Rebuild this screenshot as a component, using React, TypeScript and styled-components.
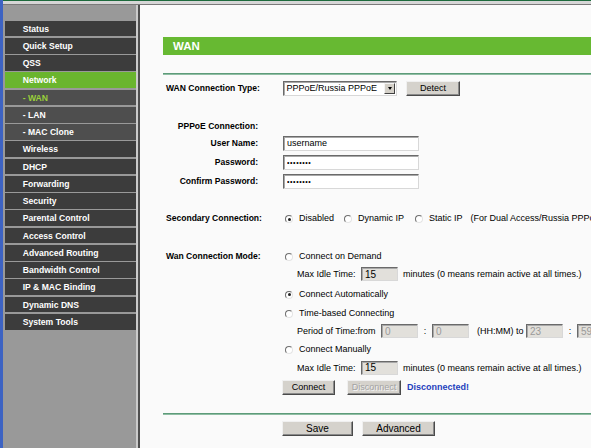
import React from 'react';
import styled, { createGlobalStyle } from 'styled-components';

const Global = createGlobalStyle`
  html, body { margin: 0; padding: 0; overflow: hidden; background: #fafafa; }
  body { font-family: "Liberation Sans", Arial, sans-serif; color: #000; }
  * { box-sizing: border-box; }
`;

const Page = styled.div`
  width: 591px;
  height: 448px;
  display: flex;
  flex-direction: column;
  border-left: 3px solid #3d63c3;
  overflow: hidden;
`;

const TopStrip = styled.div`
  flex: none;
  height: 5px;
  background: linear-gradient(
    to bottom,
    #1d6a3c 0,
    #1d6a3c 1.5px,
    #d6d6d6 1.5px,
    #d6d6d6 4px,
    #7a7a7a 4px,
    #7a7a7a 5px
  );
`;

const Body = styled.div`
  flex: 1;
  display: flex;
  min-height: 0;
`;

const Sidebar = styled.nav`
  flex: none;
  width: 137px;
  padding: 15.7px 4px 0 2px;
  display: flex;
  flex-direction: column;
  gap: 1.5px;
  background: linear-gradient(
    to right,
    #999999 0,
    #999999 calc(100% - 4px),
    #cbcbcb calc(100% - 4px),
    #cbcbcb calc(100% - 2px),
    #4f4f4f calc(100% - 2px)
  );
`;

type Variant = 'main' | 'sub' | 'active' | 'current';

const bgFor: Record<Variant, string> = {
  main: '#3c3c3c',
  sub: '#4e4e4e',
  active: '#6ab52e',
  current: '#4e4e4e',
};

const MenuItem = styled.div<{ $variant: Variant }>`
  height: 15.75px;
  display: flex;
  align-items: center;
  padding-left: 17.7px;
  background: ${(p) => bgFor[p.$variant]};
  color: ${(p) => (p.$variant === 'current' ? '#9ad03a' : '#ffffff')};
  font-weight: bold;
  font-size: 8.6px;
  white-space: nowrap;
`;

const Content = styled.main`
  flex: 1;
  min-width: 0;
  background: #fafafa;
  padding: 32.3px 0 0 22.5px;
  overflow: hidden;
`;

const Header = styled.h1`
  margin: 0;
  height: 17.4px;
  background: #67b932;
  color: #fff;
  font-size: 11.5px;
  font-weight: bold;
  display: flex;
  align-items: center;
  padding-left: 10.5px;
`;

const Divider = styled.div<{ $mt: number }>`
  margin-top: ${(p) => p.$mt}px;
  height: 2px;
  background: linear-gradient(to bottom, #5d9b79 0, #5d9b79 1px, #8fbda3 1px);
`;

const Form = styled.div`
  padding-left: 3.5px;
  display: flex;
  flex-direction: column;
`;

const Row = styled.div<{ $h: number; $mt?: number }>`
  height: ${(p) => p.$h}px;
  margin-top: ${(p) => p.$mt ?? 0}px;
  display: grid;
  grid-template-columns: 117px auto;
  align-items: center;
  white-space: nowrap;
`;

const Label = styled.div<{ $right?: boolean }>`
  font-weight: bold;
  font-size: 8.55px;
  text-align: ${(p) => (p.$right ? 'right' : 'left')};
  padding-right: ${(p) => (p.$right ? '25px' : '0')};
`;

const Field = styled.div`
  display: flex;
  align-items: center;
  font-size: 9px;
  white-space: nowrap;
`;

const SubLabel = styled.span<{ $w: number }>`
  flex: none;
  width: ${(p) => p.$w}px;
  padding-left: 14px;
  font-size: 9px;
`;

const Text = styled.span<{ $ml?: number }>`
  margin-left: ${(p) => p.$ml ?? 0}px;
  font-size: 9px;
`;

const Sep = styled.span<{ $w: number; $pl?: number }>`
  flex: none;
  width: ${(p) => p.$w}px;
  text-align: ${(p) => (p.$pl !== undefined ? 'left' : 'center')};
  padding-left: ${(p) => p.$pl ?? 0}px;
  font-size: 9px;
`;

const TextInput = styled.input<{ $w: number; $h?: number; $gray?: boolean; $muted?: boolean }>`
  flex: none;
  width: ${(p) => p.$w}px;
  height: ${(p) => p.$h ?? 15}px;
  margin: 0;
  padding: 0 0 0 3px;
  font-family: "Liberation Sans", Arial, sans-serif;
  font-size: ${(p) => (p.$gray ? '10px' : '9px')};
  color: ${(p) => (p.$muted ? '#9a9a9a' : '#000')};
  background: ${(p) => (p.$gray ? '#e2e0db' : '#ffffff')};
  border: 1px solid;
  border-color: #6a6a6a #d8d8d8 #d8d8d8 #6a6a6a;
  box-shadow: inset 1px 1px 0 #a8a8a8;
  outline: none;
  &[type='password'] {
    font-size: 7px;
    letter-spacing: 0.6px;
  }
`;

const Select = styled.div`
  width: 114px;
  height: 14.5px;
  display: flex;
  align-items: stretch;
  background: #fff;
  border: 1px solid;
  border-color: #6a6a6a #d8d8d8 #d8d8d8 #6a6a6a;
  box-shadow: inset 1px 1px 0 #a8a8a8;
  font-size: 9px;
`;

const SelectText = styled.span`
  flex: 1;
  padding-left: 2.5px;
  display: flex;
  align-items: center;
`;

const SelectArrow = styled.span`
  width: 11px;
  margin: 1px;
  background: #d4d0c8;
  border: 1px solid;
  border-color: #f4f4f4 #404040 #404040 #f4f4f4;
  display: flex;
  align-items: center;
  justify-content: center;
  &::after {
    content: '';
    border-left: 2.5px solid transparent;
    border-right: 2.5px solid transparent;
    border-top: 3px solid #000;
  }
`;

const Button = styled.button<{ $w: number; $h?: number; $fs?: number; $ml?: number }>`
  flex: none;
  width: ${(p) => p.$w}px;
  height: ${(p) => p.$h ?? 15}px;
  margin: 0 0 0 ${(p) => p.$ml ?? 0}px;
  padding: 0;
  background: #d5d2cc;
  border: 1px solid;
  border-color: #f0f0f0 #4a4a4a #4a4a4a #f0f0f0;
  box-shadow: inset -1px -1px 0 #8a8a8a;
  font-family: "Liberation Sans", Arial, sans-serif;
  font-size: ${(p) => p.$fs ?? 9}px;
  color: #000;
  white-space: nowrap;
  overflow: hidden;
  &:disabled {
    color: #a3a3a3;
    text-shadow: 1px 1px 0 #f4f4f4;
  }
`;

const Radio = styled.span<{ $checked?: boolean; $ml?: number }>`
  flex: none;
  position: relative;
  width: 8px;
  height: 8px;
  margin: 2px 6px 0 ${(p) => p.$ml ?? 2}px;
  border-radius: 50%;
  border: 1px solid;
  border-color: #6e6e6e #e4e4e4 #e4e4e4 #6e6e6e;
  background: #fff;
  &::after {
    content: '';
    display: ${(p) => (p.$checked ? 'block' : 'none')};
    position: absolute;
    left: 1.5px;
    top: 1.5px;
    width: 3px;
    height: 3px;
    border-radius: 50%;
    background: #222;
  }
`;

const Status = styled.span`
  margin-left: 6px;
  font-size: 9px;
  font-weight: bold;
  color: #1f40bd;
`;

const menu: { label: string; v: Variant }[] = [
  { label: 'Status', v: 'main' },
  { label: 'Quick Setup', v: 'main' },
  { label: 'QSS', v: 'main' },
  { label: 'Network', v: 'active' },
  { label: '- WAN', v: 'current' },
  { label: '- LAN', v: 'sub' },
  { label: '- MAC Clone', v: 'sub' },
  { label: 'Wireless', v: 'main' },
  { label: 'DHCP', v: 'main' },
  { label: 'Forwarding', v: 'main' },
  { label: 'Security', v: 'main' },
  { label: 'Parental Control', v: 'main' },
  { label: 'Access Control', v: 'main' },
  { label: 'Advanced Routing', v: 'main' },
  { label: 'Bandwidth Control', v: 'main' },
  { label: 'IP & MAC Binding', v: 'main' },
  { label: 'Dynamic DNS', v: 'main' },
  { label: 'System Tools', v: 'main' },
];

export default function App() {
  return (
    <>
      <Global />
      <Page>
        <TopStrip />
        <Body>
          <Sidebar>
            {menu.map((m) => (
              <MenuItem key={m.label} $variant={m.v}>
                {m.label}
              </MenuItem>
            ))}
          </Sidebar>
          <Content>
            <Header>WAN</Header>
            <Divider $mt={18.6} />
            <Form>
              <Row $h={18} $mt={4}>
                <Label>WAN Connection Type:</Label>
                <Field>
                  <Select>
                    <SelectText>PPPoE/Russia PPPoE</SelectText>
                    <SelectArrow />
                  </Select>
                  <Button $w={54} $ml={9}>Detect</Button>
                </Field>
              </Row>
              <Row $h={15} $mt={21.5}>
                <Label $right>PPPoE Connection:</Label>
                <Field />
              </Row>
              <Row $h={19}>
                <Label $right>User Name:</Label>
                <Field>
                  <TextInput $w={136} readOnly defaultValue="username" />
                </Field>
              </Row>
              <Row $h={19}>
                <Label $right>Password:</Label>
                <Field>
                  <TextInput $w={136} type="password" readOnly defaultValue="password" />
                </Field>
              </Row>
              <Row $h={19}>
                <Label $right>Confirm Password:</Label>
                <Field>
                  <TextInput $w={136} type="password" readOnly defaultValue="password" />
                </Field>
              </Row>
              <Row $h={18} $mt={18.5}>
                <Label>Secondary Connection:</Label>
                <Field>
                  <Radio $checked />
                  <Text>Disabled</Text>
                  <Radio $ml={10} />
                  <Text>Dynamic IP</Text>
                  <Radio $ml={11} />
                  <Text>Static IP</Text>
                  <Text $ml={8}>(For Dual Access/Russia PPPoE)</Text>
                </Field>
              </Row>
              <Row $h={17} $mt={20.5}>
                <Label>Wan Connection Mode:</Label>
                <Field>
                  <Radio />
                  <Text>Connect on Demand</Text>
                </Field>
              </Row>
              <Row $h={19}>
                <span />
                <Field>
                  <SubLabel $w={78}>Max Idle Time:</SubLabel>
                  <TextInput $w={37} $h={14} $gray readOnly defaultValue="15" />
                  <Text $ml={5}>minutes (0 means remain active at all times.)</Text>
                </Field>
              </Row>
              <Row $h={20}>
                <span />
                <Field>
                  <Radio $checked />
                  <Text>Connect Automatically</Text>
                </Field>
              </Row>
              <Row $h={18.5}>
                <span />
                <Field>
                  <Radio />
                  <Text>Time-based Connecting</Text>
                </Field>
              </Row>
              <Row $h={18}>
                <span />
                <Field>
                  <SubLabel $w={98}>Period of Time:from</SubLabel>
                  <TextInput $w={37} $h={14} $gray $muted readOnly defaultValue="0" />
                  <Sep $w={14}>:</Sep>
                  <TextInput $w={37} $h={14} $gray $muted readOnly defaultValue="0" />
                  <Sep $w={57} $pl={8}>(HH:MM) to</Sep>
                  <TextInput $w={37} $h={14} $gray $muted readOnly defaultValue="23" />
                  <Sep $w={14}>:</Sep>
                  <TextInput $w={37} $h={14} $gray $muted readOnly defaultValue="59" />
                </Field>
              </Row>
              <Row $h={18}>
                <span />
                <Field>
                  <Radio />
                  <Text>Connect Manually</Text>
                </Field>
              </Row>
              <Row $h={19}>
                <span />
                <Field>
                  <SubLabel $w={78}>Max Idle Time:</SubLabel>
                  <TextInput $w={37} $h={14} $gray readOnly defaultValue="15" />
                  <Text $ml={5}>minutes (0 means remain active at all times.)</Text>
                </Field>
              </Row>
              <Row $h={20}>
                <span />
                <Field>
                  <Button $w={53} $h={14.5} $ml={-1}>Connect</Button>
                  <Button $w={54} $h={14.5} $ml={12} disabled>Disconnect</Button>
                  <Status>Disconnected!</Status>
                </Field>
              </Row>
            </Form>
            <Divider $mt={16} />
            <Form>
              <Row $h={15} $mt={6}>
                <span />
                <Field>
                  <Button $w={71} $fs={10} $ml={-1}>Save</Button>
                  <Button $w={73} $fs={10} $ml={9}>Advanced</Button>
                </Field>
              </Row>
            </Form>
          </Content>
        </Body>
      </Page>
    </>
  );
}
